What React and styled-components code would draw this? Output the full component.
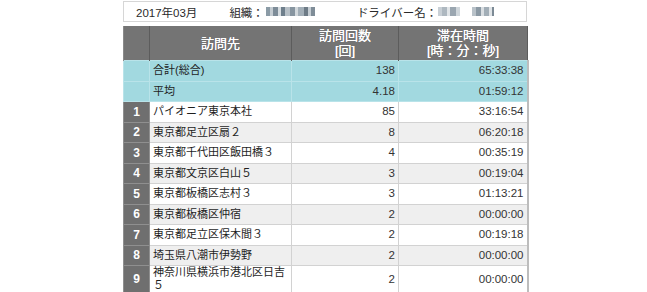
import React from "react";
import styled, { createGlobalStyle } from "styled-components";

const GlobalStyle = createGlobalStyle`
  html, body {
    margin: 0;
    padding: 0;
    background: #ffffff;
  }
  body {
    font-family: "Liberation Sans", "Noto Sans CJK JP", sans-serif;
  }
`;

const Page = styled.div`
  width: 647px;
  height: 292px;
  overflow: hidden;
  padding: 1px 0 0 123px;
  box-sizing: border-box;
`;

const InfoBar = styled.div`
  width: 404px;
  height: 21px;
  box-sizing: border-box;
  border: 1px solid #d6d6d6;
  display: flex;
  align-items: center;
  font-size: 11.5px;
  color: #2a2a2a;
`;

const InfoItem = styled.span`
  display: flex;
  align-items: center;
  margin-left: ${(p) => p.$left}px;
`;

const Mosaic = styled.span`
  display: inline-flex;
  height: 9px;
  margin-left: ${(p) => p.$gap || 0}px;
`;

const Tile = styled.span`
  display: block;
  width: ${(p) => p.$w}px;
  height: 9px;
  background: ${(p) => p.$c};
`;

const Table = styled.table`
  margin-top: 4px;
  width: 404px;
  border-collapse: collapse;
  table-layout: fixed;
  font-family: "Liberation Sans", "Noto Sans CJK JP", sans-serif;
  font-size: 11.5px;
`;

const Head = styled.th`
  background: #747474;
  color: #ffffff;
  font-weight: normal;
  font-size: 13px;
  line-height: 15px;
  height: 34px;
  padding: 0;
  border-left: 1px solid #5c5c5c;
  border-right: 1px solid #5c5c5c;
  text-align: center;
  text-shadow: 0 0 0.4px #ffffff;
  &:first-child {
    border-left: 1px solid #8a8a8a;
  }
`;

const Row = styled.tr`
  background: ${(p) => (p.$kind === "sum" ? "#a2d9e0" : p.$kind === "alt" ? "#efefef" : "#ffffff")};
`;

const NumCell = styled.td`
  background: ${(p) => (p.$sum ? "#a2d9e0" : "#6f6f6f")};
  color: #ffffff;
  font-weight: bold;
  font-size: 12px;
  text-align: center;
  padding: 0;
  height: 19.5px;
  border: 1px solid ${(p) => (p.$sum ? "#b9e3e9" : "#8f8f8f")};
`;

const Cell = styled.td`
  padding: 0 3px;
  text-align: ${(p) => (p.$right ? "right" : "left")};
  color: ${(p) => (p.$right ? "#333333" : "#1e1e1e")};
  font-size: ${(p) => (p.$right ? 11.5 : 11)}px;
  line-height: 13px;
  border: 1px solid ${(p) => (p.$sum ? "#b9e3e9" : "#d2d2d2")};
  border-right-width: ${(p) => (p.$last ? 2 : 1)}px;
  border-right-color: ${(p) => (p.$last ? "#bdbdbd" : p.$sum ? "#b9e3e9" : "#d2d2d2")};
  word-break: break-all;
`;

const summary = [
  { name: "合計(総合)", count: "138", time: "65:33:38" },
  { name: "平均", count: "4.18", time: "01:59:12" },
];

const visits = [
  { name: "パイオニア東京本社", count: "85", time: "33:16:54" },
  { name: "東京都足立区扇２", count: "8", time: "06:20:18" },
  { name: "東京都千代田区飯田橋３", count: "4", time: "00:35:19" },
  { name: "東京都文京区白山５", count: "3", time: "00:19:04" },
  { name: "東京都板橋区志村３", count: "3", time: "01:13:21" },
  { name: "東京都板橋区仲宿", count: "2", time: "00:00:00" },
  { name: "東京都足立区保木間３", count: "2", time: "00:19:18" },
  { name: "埼玉県八潮市伊勢野", count: "2", time: "00:00:00" },
  { name: "神奈川県横浜市港北区日吉５", count: "2", time: "00:00:00" },
];

// pixelated (blurred-out) names
const orgTiles = [
  ["#8b9ba6", 4], ["#c4ccd2", 3], ["#7d8c98", 5], ["#d7dde1", 3], ["#6f7f8c", 4],
  ["#b7c0c7", 5], ["#8795a0", 5], ["#d2d8dc", 3], ["#a3afb8", 6], ["#6d7b86", 4],
  ["#c5cdd3", 3], ["#7f8d98", 4],
];
const driverTiles1 = [
  ["#c9d0d6", 4], ["#aeb8c0", 5], ["#e1e5e8", 3], ["#9aa6b0", 6], ["#cfd6db", 4],
];
const driverTiles2 = [
  ["#b9c2c9", 4], ["#8b99a4", 5], ["#d9dee2", 3], ["#a2aeb7", 5], ["#e0e4e7", 3], ["#7c8a95", 2],
];

const renderTiles = (tiles) =>
  tiles.map(([c, w], i) => <Tile key={i} $c={c} $w={w} />);

export default function App() {
  return (
    <Page>
      <GlobalStyle />
      <InfoBar>
        <InfoItem $left={12}>2017年03月</InfoItem>
        <InfoItem $left={32}>
          組織：
          <Mosaic $gap={2}>{renderTiles(orgTiles)}</Mosaic>
        </InfoItem>
        <InfoItem $left={42}>
          ドライバー名：
          <Mosaic $gap={1}>{renderTiles(driverTiles1)}</Mosaic>
          <Mosaic $gap={12}>{renderTiles(driverTiles2)}</Mosaic>
        </InfoItem>
      </InfoBar>
      <Table>
        <colgroup>
          <col style={{ width: 26 }} />
          <col style={{ width: 142 }} />
          <col style={{ width: 107 }} />
          <col style={{ width: 129 }} />
        </colgroup>
        <thead>
          <tr>
            <Head />
            <Head>訪問先</Head>
            <Head>
              訪問回数
              <br />
              [回]
            </Head>
            <Head>
              滞在時間
              <br />
              [時：分：秒]
            </Head>
          </tr>
        </thead>
        <tbody>
          {summary.map((s) => (
            <Row key={s.name} $kind="sum">
              <NumCell $sum />
              <Cell $sum>{s.name}</Cell>
              <Cell $sum $right>{s.count}</Cell>
              <Cell $sum $right $last>{s.time}</Cell>
            </Row>
          ))}
          {visits.map((v, i) => (
            <Row key={v.name} $kind={i % 2 === 1 ? "alt" : "plain"}>
              <NumCell>{i + 1}</NumCell>
              <Cell>{v.name}</Cell>
              <Cell $right>{v.count}</Cell>
              <Cell $right $last>{v.time}</Cell>
            </Row>
          ))}
        </tbody>
      </Table>
    </Page>
  );
}
